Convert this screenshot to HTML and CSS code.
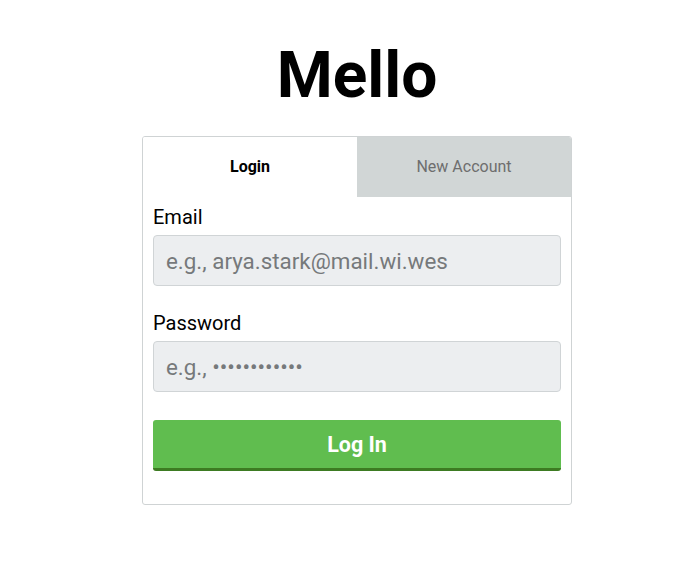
FILE: index.html
```html
<!DOCTYPE html>
<html>
<head>
<meta charset="utf-8">
<link rel="stylesheet" href="styles.css">
</head>
<body>
<main class="page">
  <h1 class="title">Mello</h1>
  <section class="card">
    <div class="tabs">
      <div class="tab tab-active">Login</div>
      <div class="tab tab-inactive">New Account</div>
    </div>
    <form class="form">
      <label class="label" for="email">Email</label>
      <input class="input" id="email" type="text" placeholder="e.g., arya.stark@mail.wi.wes">
      <label class="label label-gap" for="password">Password</label>
      <input class="input" id="password" type="text" placeholder="e.g., ••••••••••••">
      <button class="button" type="button">Log In</button>
    </form>
  </section>
</main>
</body>
</html>
```
FILE: styles.css
```css
* { box-sizing: border-box; }
html, body { margin: 0; padding: 0; background: #fff; }
body { font-family: Roboto, "Liberation Sans", sans-serif; color: #000; }
.page {
  width: 430px;
  margin-left: 142px;
  padding-top: 38px;
  display: flex;
  flex-direction: column;
}
.title {
  margin: 0;
  font-size: 64px;
  font-weight: 700;
  line-height: 75px;
  text-align: center;
  letter-spacing: 0;
}
.card {
  margin-top: 23px;
  border: 1px solid #cfd3d4;
  border-radius: 3px;
  overflow: hidden;
  padding-bottom: 33px;
}
.tabs {
  display: flex;
  height: 60px;
}
.tab {
  flex: 1;
  display: flex;
  align-items: center;
  justify-content: center;
  font-size: 16px;
  padding-bottom: 1px;
}
.tab-active { font-weight: 700; color: #000; background: #fff; }
.tab-inactive { background: #d1d6d6; color: #6e6e6e; }
.form {
  display: flex;
  flex-direction: column;
  padding: 8px 10px 0 10px;
}
.label {
  font-size: 20px;
  line-height: 24px;
  margin-bottom: 6px;
}
.label-gap { margin-top: 25px; }
.input {
  height: 51px;
  border: 1px solid #d0d4d6;
  border-radius: 4px;
  background: #eceef0;
  font-family: Roboto, "Liberation Sans", sans-serif;
  font-size: 22.4px;
  padding: 0 12px;
  color: #333;
  outline: none;
}
.input::placeholder { color: #76797b; }
.button {
  margin-top: 28px;
  height: 51px;
  border: none;
  border-bottom: 3px solid #3d7b22;
  border-radius: 3px;
  background: #60bd4f;
  color: #fff;
  font-family: Roboto, "Liberation Sans", sans-serif;
  font-size: 21.5px;
  font-weight: 700;
}
```
